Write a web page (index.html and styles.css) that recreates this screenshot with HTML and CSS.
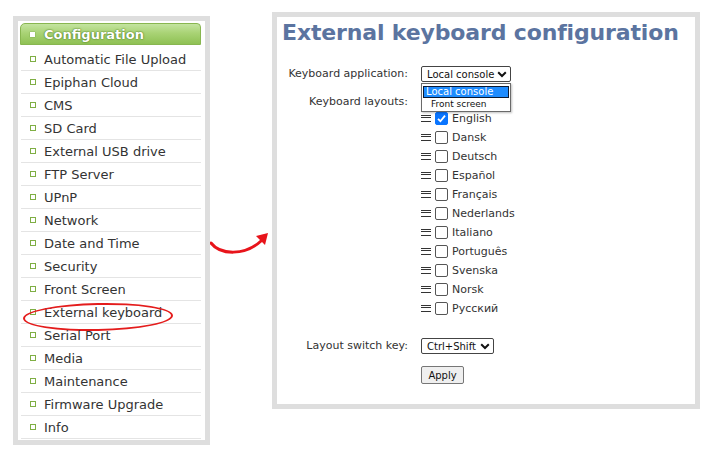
FILE: index.html
```html
<!DOCTYPE html>
<html>
<head>
<meta charset="utf-8">
<link rel="stylesheet" href="styles.css">
</head>
<body>
<div class="page">
  <nav class="sidebar">
    <div class="menu-head"><span class="head-bullet"></span>Configuration</div>
    <ul class="menu">
      <li><span class="bullet"></span>Automatic File Upload</li>
      <li><span class="bullet"></span>Epiphan Cloud</li>
      <li><span class="bullet"></span>CMS</li>
      <li><span class="bullet"></span>SD Card</li>
      <li><span class="bullet"></span>External USB drive</li>
      <li><span class="bullet"></span>FTP Server</li>
      <li><span class="bullet"></span>UPnP</li>
      <li><span class="bullet"></span>Network</li>
      <li><span class="bullet"></span>Date and Time</li>
      <li><span class="bullet"></span>Security</li>
      <li><span class="bullet"></span>Front Screen</li>
      <li class="circled"><span class="bullet"></span>External keyboard<span class="ring"></span></li>
      <li><span class="bullet"></span>Serial Port</li>
      <li><span class="bullet"></span>Media</li>
      <li><span class="bullet"></span>Maintenance</li>
      <li><span class="bullet"></span>Firmware Upgrade</li>
      <li><span class="bullet"></span>Info</li>
    </ul>
  </nav>

  <div class="arrow-col">
    <svg class="arrow" width="62" height="30" viewBox="0 0 62 30">
      <path d="M1 15 C 10 27, 35 28, 51 13" fill="none" stroke="#e8141b" stroke-width="3" stroke-linecap="round"/>
      <polygon points="58,5 46,8 55,17" fill="#e8141b"/>
    </svg>
  </div>

  <section class="panel">
    <h1 class="title">External keyboard configuration</h1>

    <div class="row row-app">
      <span class="lbl">Keyboard application:</span>
      <div class="ctl">
        <div class="select select-app"><span>Local console</span><svg width="10" height="7" viewBox="0 0 10 7"><path d="M1.2 1.3 L5 5 L8.8 1.3" fill="none" stroke="#111" stroke-width="2"/></svg></div>
        <ul class="dropdown">
          <li class="opt opt-active">Local console</li>
          <li class="opt">Front screen</li>
        </ul>
      </div>
    </div>

    <div class="row row-layouts">
      <span class="lbl lbl-layouts">Keyboard layouts:</span>
      <ul class="layouts">
        <li><span class="grip"></span><span class="check checked"><svg width="13" height="13" viewBox="0 0 13 13"><path d="M3 6.8 L5.4 9.2 L10 3.6" fill="none" stroke="#fff" stroke-width="1.8"/></svg></span>English</li>
        <li><span class="grip"></span><span class="check"></span>Dansk</li>
        <li><span class="grip"></span><span class="check"></span>Deutsch</li>
        <li><span class="grip"></span><span class="check"></span>Español</li>
        <li><span class="grip"></span><span class="check"></span>Français</li>
        <li><span class="grip"></span><span class="check"></span>Nederlands</li>
        <li><span class="grip"></span><span class="check"></span>Italiano</li>
        <li><span class="grip"></span><span class="check"></span>Português</li>
        <li><span class="grip"></span><span class="check"></span>Svenska</li>
        <li><span class="grip"></span><span class="check"></span>Norsk</li>
        <li><span class="grip"></span><span class="check"></span>Русский</li>
      </ul>
    </div>

    <div class="row row-switch">
      <span class="lbl">Layout switch key:</span>
      <div class="select select-switch"><span>Ctrl+Shift</span><svg width="10" height="7" viewBox="0 0 10 7"><path d="M1.2 1.3 L5 5 L8.8 1.3" fill="none" stroke="#111" stroke-width="2"/></svg></div>
    </div>

    <div class="row row-apply">
      <span class="lbl"></span>
      <button class="apply">Apply</button>
    </div>
  </section>
</div>
</body>
</html>
```

FILE: styles.css
```css
* { box-sizing: border-box; }
html, body { margin: 0; padding: 0; background: #fff; }
body { font-family: "DejaVu Sans", Verdana, sans-serif; color: #333; }

.page { display: flex; align-items: flex-start; }

/* ---------- sidebar ---------- */
.sidebar {
  margin: 16px 0 0 13px;
  width: 197px;
  height: 429px;
  border: 5px solid #dedede;
  background: #fff;
  padding: 2px 4px 1px 2px;
}
.menu-head {
  height: 22px;
  display: flex;
  align-items: center;
  padding-left: 9px;
  border: 1px solid #88b650;
  border-radius: 5px 4px 0 0;
  background: linear-gradient(to bottom, #c4e4a0 0%, #a9d375 45%, #8fc154 100%);
  color: #fff;
  font-weight: bold;
  font-size: 13px;
  text-shadow: 0 0 2px #4d7a1f, 0 0 1px #4d7a1f;
}
.head-bullet {
  width: 5px; height: 5px; background: #fff;
  margin-right: 9px;
  box-shadow: 0 0 1px #5a8a2a;
}
.menu { list-style: none; margin: 3px 0 0 1px; padding: 0; }
.menu li {
  position: relative;
  height: 23px;
  display: flex;
  align-items: center;
  padding-left: 9px;
  border-bottom: 1px solid #e4e4e4;
  font-size: 13px;
  color: #333;
}
.bullet {
  width: 6px; height: 6px;
  border: 1px solid #7fae44;
  margin-right: 8px;
  flex: none;
}
.ring {
  position: absolute;
  left: 2px; top: 2px;
  width: 150px; height: 28px;
  border: 2px solid #e41c1c;
  border-radius: 50%;
  transform: rotate(-1.2deg);
  pointer-events: none;
}

/* ---------- arrow ---------- */
.arrow-col { width: 62px; flex: none; padding-top: 228px; }
.arrow { display: block; }

/* ---------- panel ---------- */
.panel {
  margin-top: 12px;
  width: 428px;
  height: 397px;
  border: 5px solid #dedede;
  background: #fff;
}
.title {
  margin: 3px 0 0 5px;
  font-size: 22px;
  line-height: 26px;
  letter-spacing: -0.15px;
  font-weight: bold;
  color: #5b74a0;
  white-space: nowrap;
}
.row { display: flex; align-items: center; font-size: 11px; }
.lbl {
  width: 131px;
  margin-right: 13px;
  text-align: right;
  color: #333;
  line-height: 14px;
  flex: none;
}
.row-app { margin-top: 20px; height: 16px; }
.ctl { position: relative; }
.select {
  height: 16px;
  border: 1px solid #444;
  border-radius: 2px;
  display: flex;
  align-items: center;
  justify-content: space-between;
  padding: 0 3px 0 5px;
  font-size: 10px;
  color: #111;
  background: #fff;
}
.select-app { width: 90px; }
.select-switch { width: 73px; }
.dropdown {
  position: absolute;
  top: 17px; left: 0;
  width: 90px;
  margin: 0;
  padding: 2px 1px 1px 1px;
  list-style: none;
  border: 1px solid #6a6a6a;
  background: #fff;
  box-shadow: 1px 1px 2px rgba(0,0,0,0.25);
  z-index: 5;
}
.opt { font-size: 10px; height: 12px; line-height: 12px; padding-left: 4px; color: #111; white-space: nowrap; }
.opt-active {
  background: #1e8cff;
  color: #fff;
  box-shadow: inset 0 0 0 1px #0b1a33;
  padding-left: 3px;
}
.opt + .opt { font-size: 9px; padding-left: 8px; }

.row-layouts { margin-top: 13px; align-items: flex-start; }
.layouts { list-style: none; margin: 0; padding: 14px 0 0 0; }
.layouts li {
  height: 19px;
  display: flex;
  align-items: center;
  font-size: 11px;
  color: #333;
}
.grip {
  width: 10px; height: 7px;
  border-top: 1.5px solid #333;
  border-bottom: 1.5px solid #333;
  position: relative;
  margin-right: 4px;
  flex: none;
}
.grip::after {
  content: "";
  position: absolute;
  left: 0; right: 0; top: 1.3px;
  border-top: 1.5px solid #333;
}
.check {
  width: 13px; height: 13px;
  border: 1px solid #555;
  border-radius: 2px;
  margin-right: 4px;
  flex: none;
  background: #fff;
}
.check.checked { background: #0a75ff; border-color: #0a75ff; }
.check svg { display: block; margin: -1px; }

.row-switch { margin-top: 20px; height: 16px; }
.row-apply { margin-top: 12px; }
.apply {
  width: 43px; height: 18px;
  padding: 0;
  font-family: "DejaVu Sans", Verdana, sans-serif;
  font-size: 10px;
  color: #111;
  background: #efefef;
  border: 1px solid #767676;
  border-radius: 2px;
}
```
